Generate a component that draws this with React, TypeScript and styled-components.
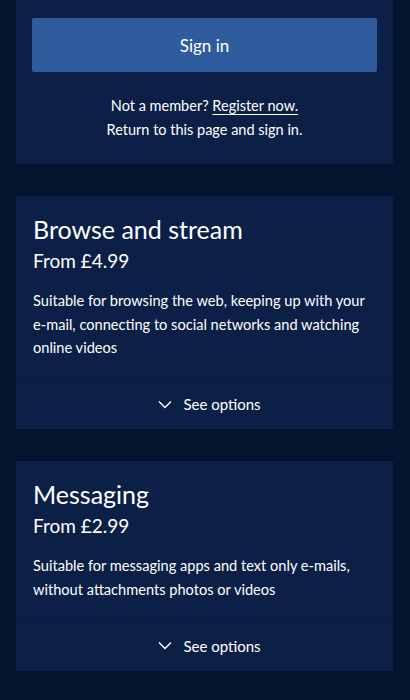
import React from 'react'
import styled, { createGlobalStyle } from 'styled-components'

const GlobalStyle = createGlobalStyle`
body {
  margin: 0;
  background: #04132e;
  font-family: Lato, "Open Sans", sans-serif;
  color: #fff;
}
`

const Page = styled.div`
display: flex;
flex-flow: column;
gap: 32px;
padding: 0 17px 30px 16px;
`

const Card = styled.section`
background: #0b1f47;
display: flex;
flex-flow: column;
`

const SignInBody = styled.div`
padding: 18px 16px 22px;
display: flex;
flex-flow: column;
align-items: center;
`

const SignInButton = styled.button`
width: 100%;
height: 54px;
border: none;
border-radius: 2px;
background: #2e5c9c;
color: #fff;
font-family: inherit;
font-size: 17px;
cursor: pointer;
`

const Note = styled.p`
margin: 22px 0 0;
font-size: 14.5px;
line-height: 24px;
text-align: center;
`

const Link = styled.a`
color: #fff;
text-decoration: underline;
text-underline-offset: 3px;
`

const PlanBody = styled.div`
padding: 15px 17px 18px;
`

const PlanTitle = styled.h2`
margin: 0;
font-weight: 400;
font-size: 25px;
line-height: 36px;
`

const PlanPrice = styled.p`
margin: 0;
font-size: 19px;
line-height: 28px;
`

const PlanText = styled.p`
margin: 14px 0 0;
font-size: 14.6px;
line-height: 23.7px;
`

const Options = styled.button`
border: none;
border-top: 1px solid #081a3d;
background: transparent;
color: #fff;
height: 51px;
padding: 0 0 0 10px;
display: flex;
align-items: center;
justify-content: center;
gap: 11px;
font-family: inherit;
font-size: 15px;
cursor: pointer;
`

const Chevron = () => (
    <svg width="14" height="9" viewBox="0 0 14 9" fill="none">
        <path d="M1 1.5 L7 7.5 L13 1.5" stroke="#fff" strokeWidth="1.4" />
    </svg>
)

type PlanProps = {
    title: string;
    price: string;
    text: string;
}

const Plan = ({title, price, text}: PlanProps) => (
    <Card>
        <PlanBody>
            <PlanTitle>{title}</PlanTitle>
            <PlanPrice>{price}</PlanPrice>
            <PlanText>{text}</PlanText>
        </PlanBody>
        <Options>
            <Chevron />
            See options
        </Options>
    </Card>
)

const App = () => (
    <>
        <GlobalStyle />
        <Page>
            <Card>
                <SignInBody>
                    <SignInButton>Sign in</SignInButton>
                    <Note>
                        Not a member? <Link href="#">Register now.</Link>
                        <br />
                        Return to this page and sign in.
                    </Note>
                </SignInBody>
            </Card>
            <Plan
                title="Browse and stream"
                price="From £4.99"
                text="Suitable for browsing the web, keeping up with your e-mail, connecting to social networks and watching online videos"
            />
            <Plan
                title="Messaging"
                price="From £2.99"
                text="Suitable for messaging apps and text only e-mails, without attachments photos or videos"
            />
        </Page>
    </>
)

export default App
